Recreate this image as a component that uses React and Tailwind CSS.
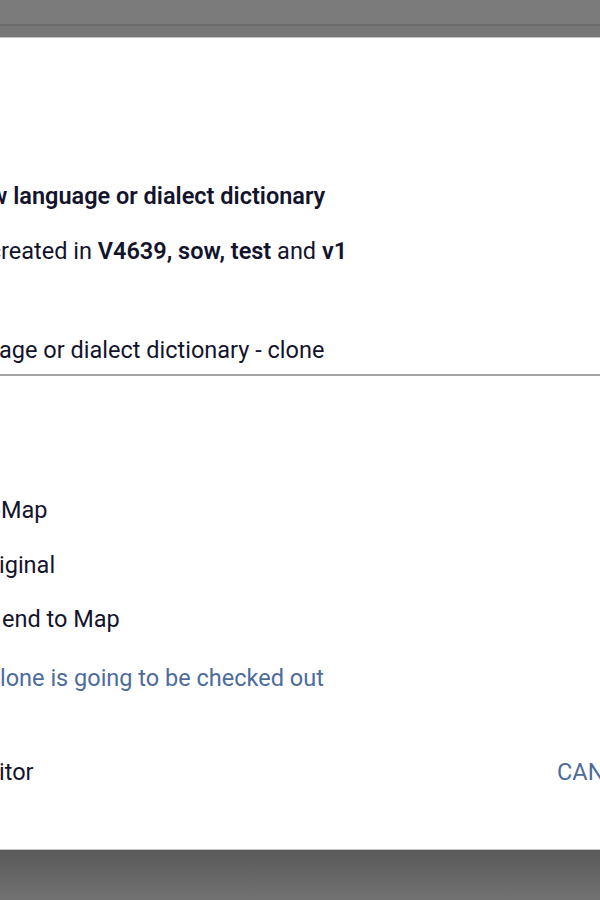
const Line = ({ hidden, children, className = "" }) => (
  <div className={`flex whitespace-nowrap ${className}`}>
    {/* the start of the line runs off the left edge of the window */}
    {hidden && (
      <span className="inline-block w-0 shrink-0 [direction:rtl]">
        <span className="[direction:ltr] [unicode-bidi:isolate]">{hidden}</span>
      </span>
    )}
    <span>{children}</span>
  </div>
);

export default function App() {
  return (
    <div
      className="w-[600px] h-[900px] overflow-hidden flex flex-col bg-[#7a7a7a] text-[#13142c]"
      style={{ fontFamily: "Roboto, 'Noto Sans', sans-serif" }}
    >
      {/* backdrop above dialog */}
      <div className="h-[37px] flex flex-col">
        <div className="h-[24px] bg-[#7b7b7b]" />
        <div className="h-[2px] bg-[#6b6b6b]" />
        <div className="flex-1 bg-[#777777]" />
      </div>

      {/* dialog */}
      <div className="h-[813px] bg-white border-t border-b border-[#c4c4c4] flex flex-col text-[23.5px] leading-[28px]">
        <Line hidden="Clone ne" className="mt-[144px] font-semibold -ml-[10px]">
          w language or dialect dictionary
        </Line>
        <Line hidden="Clone will be c" className="mt-[27px] ml-[1px]">
          reated in <b className="font-semibold">V4639, sow, test</b> and <b className="font-semibold">v1</b>
        </Line>

        <div className="mt-[71px] pb-[10px] border-b-2 border-[#a3a3a3]">
          <Line hidden="New langu" className="-ml-[1px]">
            age or dialect dictionary - clone
          </Line>
        </div>

        <Line hidden="Add to" className="mt-[120px] ml-[1px]">
          Map
        </Line>
        <Line hidden="Keep or" className="mt-[27px] -ml-[1px]">
          iginal
        </Line>
        <Line className="mt-[26px] ml-[2px]">end to Map</Line>
        <Line hidden="C" className="mt-[31px] text-[#4d6c9c]">
          lone is going to be checked out
        </Line>

        <div className="mt-[66px] flex items-center">
          <div className="w-[557px] shrink-0">
            <Line hidden="Open in ed" className="-ml-[1px]">
              itor
            </Line>
          </div>
          <div className="flex shrink-0 gap-8 whitespace-nowrap text-[#4d6c9c]">
            <span>CANCEL</span>
            <span>CLONE</span>
          </div>
        </div>
      </div>

      {/* backdrop below dialog */}
      <div className="flex-1 bg-gradient-to-b from-[#595959] to-[#727272]" />
    </div>
  );
}
